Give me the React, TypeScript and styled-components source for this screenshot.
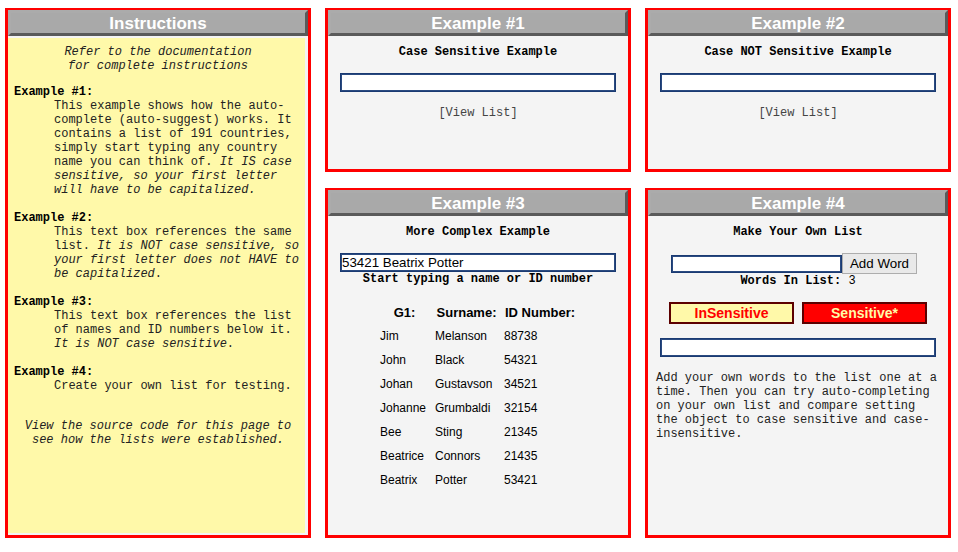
import React from "react";
import styled, { createGlobalStyle } from "styled-components";

const GlobalStyle = createGlobalStyle`
  html, body { margin: 0; padding: 0; background: #ffffff; }
  body { font-family: "Liberation Sans", Arial, sans-serif; }
`;

const mono = `"Liberation Mono", "Courier New", monospace`;

const Page = styled.div`
  display: flex;
  gap: 14px;
  padding: 8px 7px 0 5px;
  width: 958px;
  box-sizing: border-box;
`;

const Column = styled.div`
  width: 306px;
  display: flex;
  flex-direction: column;
  gap: 16px;
`;

const Panel = styled.section<{ $h: number }>`
  height: ${(p) => p.$h}px;
  box-sizing: border-box;
  border: 3px solid #ff0000;
  border-top-width: 2px;
  background: #f4f4f4;
  display: flex;
  flex-direction: column;
`;

const Header = styled.h2`
  margin: 0;
  height: 26px;
  box-sizing: border-box;
  border: 3px solid;
  border-color: #ababab #5a5a5a #5a5a5a #ababab;
  background: #a9a9a9;
  color: #ffffff;
  padding-top: 1px;
  font: bold 17px/19px "Liberation Sans", Arial, sans-serif;
  text-align: center;
`;

const InstructionBody = styled.div`
  flex: 1;
  margin: 2px 3px 2px 0;
  background: #fff9a9;
  padding: 7px 3px 0 6px;
  font: 12px/14px ${mono};
  color: #222;
`;

const CenterNote = styled.p<{ $gap?: number }>`
  margin: ${(p) => p.$gap ?? 0}px 0 0 0;
  text-align: center;
  font-style: italic;
`;

const ExampleBlock = styled.div<{ $gap: number }>`
  margin-top: ${(p) => p.$gap}px;
`;

const ExampleLabel = styled.div`
  font-weight: bold;
  color: #000;
`;

const Indent = styled.div`
  margin-left: 40px;
`;

const Em = styled.em`
  font-style: italic;
`;

const Body = styled.div`
  flex: 1;
  display: flex;
  flex-direction: column;
  align-items: center;
  padding-top: 9px;
  font: 12px/14px ${mono};
  color: #000;
`;

const Title = styled.div`
  font-weight: bold;
  line-height: 14px;
`;

const TextInput = styled.input<{ $w: number; $mt?: number }>`
  width: ${(p) => p.$w}px;
  height: 19px;
  margin: ${(p) => p.$mt ?? 0}px 0 0 0;
  box-sizing: border-box;
  border: 1px solid #1a3a72;
  box-shadow: inset 0 0 0 1px #2a4a80;
  background: #fff;
  padding: 0 1px;
  font: 13.333px "Liberation Sans", Arial, sans-serif;
  color: #000;
  outline: none;
`;

const ViewList = styled.a`
  margin-top: 14px;
  color: #444;
  text-decoration: none;
  cursor: pointer;
`;

const Hint = styled.div`
  margin-top: 1px;
  font-weight: bold;
  line-height: 13px;
`;

const NameTable = styled.table`
  margin-top: 14px;
  border-collapse: collapse;
  font: 12px "Liberation Sans", Arial, sans-serif;
  color: #000;
`;

const Th = styled.th<{ $w: number }>`
  width: ${(p) => p.$w}px;
  height: 24px;
  padding: 0 3px;
  font: bold 13px "Liberation Sans", Arial, sans-serif;
  text-align: center;
`;

const Td = styled.td`
  height: 24px;
  padding: 0 3px;
  text-align: left;
  white-space: nowrap;
`;

const AddRow = styled.div`
  margin-top: 14px;
  display: flex;
  align-items: center;
  padding-right: 8px;
`;

const AddButton = styled.button`
  height: 21px;
  width: 75px;
  box-sizing: border-box;
  border: 1px solid #adadad;
  background: #e9e9e9;
  font: 13.333px "Liberation Sans", Arial, sans-serif;
  color: #000;
  padding: 0;
`;

const Count = styled.div`
  margin-top: 1px;
  line-height: 13px;
  font-weight: bold;
`;

const CountValue = styled.span`
  font-weight: normal;
`;

const ToggleRow = styled.div`
  margin-top: 14px;
  display: flex;
  gap: 8px;
`;

const Toggle = styled.button<{ $active?: boolean }>`
  width: 125px;
  height: 22px;
  box-sizing: border-box;
  border: 2px solid #5c0000;
  background: ${(p) => (p.$active ? "#ff0000" : "#fff9a9")};
  color: ${(p) => (p.$active ? "#fffaa8" : "#ff0000")};
  font: bold 14px "Liberation Sans", Arial, sans-serif;
  padding: 0;
`;

const Note = styled.p`
  align-self: stretch;
  margin: 14px 0 0 0;
  padding-left: 8px;
  color: #222;
  text-align: left;
`;

const people = [
  ["Jim", "Melanson", "88738"],
  ["John", "Black", "54321"],
  ["Johan", "Gustavson", "34521"],
  ["Johanne", "Grumbaldi", "32154"],
  ["Bee", "Sting", "21345"],
  ["Beatrice", "Connors", "21435"],
  ["Beatrix", "Potter", "53421"],
];

export default function App() {
  return (
    <>
      <GlobalStyle />
      <Page>
        <Column>
          <Panel $h={530}>
            <Header>Instructions</Header>
            <InstructionBody>
              <CenterNote>
                Refer to the documentation
                <br />
                for complete instructions
              </CenterNote>
              <ExampleBlock $gap={12}>
                <ExampleLabel>Example #1:</ExampleLabel>
                <Indent>
                  This example shows how the auto-
                  <br />
                  complete (auto-suggest) works. It
                  <br />
                  contains a list of 191 countries,
                  <br />
                  simply start typing any country
                  <br />
                  name you can think of. <Em>It IS case</Em>
                  <br />
                  <Em>sensitive, so your first letter</Em>
                  <br />
                  <Em>will have to be capitalized.</Em>
                </Indent>
              </ExampleBlock>
              <ExampleBlock $gap={14}>
                <ExampleLabel>Example #2:</ExampleLabel>
                <Indent>
                  This text box references the same
                  <br />
                  list. <Em>It is NOT case sensitive, so</Em>
                  <br />
                  <Em>your first letter does not HAVE to</Em>
                  <br />
                  <Em>be capitalized</Em>.
                </Indent>
              </ExampleBlock>
              <ExampleBlock $gap={14}>
                <ExampleLabel>Example #3:</ExampleLabel>
                <Indent>
                  This text box references the list
                  <br />
                  of names and ID numbers below it.
                  <br />
                  <Em>It is NOT case sensitive</Em>.
                </Indent>
              </ExampleBlock>
              <ExampleBlock $gap={14}>
                <ExampleLabel>Example #4:</ExampleLabel>
                <Indent>Create your own list for testing.</Indent>
              </ExampleBlock>
              <CenterNote $gap={26}>
                View the source code for this page to
                <br />
                see how the lists were established.
              </CenterNote>
            </InstructionBody>
          </Panel>
        </Column>

        <Column>
          <Panel $h={164}>
            <Header>Example #1</Header>
            <Body>
              <Title>Case Sensitive Example</Title>
              <TextInput $w={276} $mt={14} />
              <ViewList>[View List]</ViewList>
            </Body>
          </Panel>
          <Panel $h={350}>
            <Header>Example #3</Header>
            <Body>
              <Title>More Complex Example</Title>
              <TextInput $w={276} $mt={14} defaultValue="53421 Beatrix Potter" />
              <Hint>Start typing a name or ID number</Hint>
              <NameTable>
                <thead>
                  <tr>
                    <Th $w={49}>G1:</Th>
                    <Th $w={63}>Surname:</Th>
                    <Th $w={72}>ID Number:</Th>
                  </tr>
                </thead>
                <tbody>
                  {people.map(([g, s, id]) => (
                    <tr key={id}>
                      <Td>{g}</Td>
                      <Td>{s}</Td>
                      <Td>{id}</Td>
                    </tr>
                  ))}
                </tbody>
              </NameTable>
            </Body>
          </Panel>
        </Column>

        <Column>
          <Panel $h={164}>
            <Header>Example #2</Header>
            <Body>
              <Title>Case NOT Sensitive Example</Title>
              <TextInput $w={276} $mt={14} />
              <ViewList>[View List]</ViewList>
            </Body>
          </Panel>
          <Panel $h={350}>
            <Header>Example #4</Header>
            <Body>
              <Title>Make Your Own List</Title>
              <AddRow>
                <TextInput $w={171} style={{ height: 18 }} />
                <AddButton>Add Word</AddButton>
              </AddRow>
              <Count>
                Words In List: <CountValue>3</CountValue>
              </Count>
              <ToggleRow>
                <Toggle>InSensitive</Toggle>
                <Toggle $active>Sensitive*</Toggle>
              </ToggleRow>
              <TextInput $w={276} $mt={14} />
              <Note>
                Add your own words to the list one at a
                <br />
                time. Then you can try auto-completing
                <br />
                on your own list and compare setting
                <br />
                the object to case sensitive and case-
                <br />
                insensitive.
              </Note>
            </Body>
          </Panel>
        </Column>
      </Page>
    </>
  );
}
